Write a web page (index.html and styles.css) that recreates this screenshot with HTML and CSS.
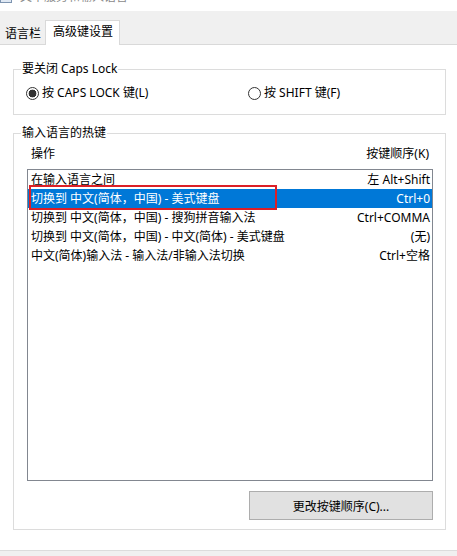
FILE: index.html
```html
<!DOCTYPE html>
<html lang="zh-CN">
<head>
<meta charset="utf-8">
<title>文本服务和输入语言</title>
<link rel="stylesheet" href="styles.css">
</head>
<body>
<div class="titlebar">
  <svg class="appicon" width="12" height="16" viewBox="0 0 12 16"><rect x="0.5" y="0.5" width="11" height="15" fill="#dfe8f3" stroke="#7d94b0"/></svg>
  <span class="title">文本服务和输入语言</span>
</div>
<div class="tabs">
  <div class="tab">语言栏</div>
  <div class="tab active">高级键设置</div>
</div>
<div class="page">
  <fieldset class="group g1">
    <legend>要关闭 Caps Lock</legend>
    <div class="radios">
      <label class="radio"><span class="dot on"></span>按 CAPS LOCK 键(L)</label>
      <label class="radio"><span class="dot"></span>按 SHIFT 键(F)</label>
    </div>
  </fieldset>
  <fieldset class="group g2">
    <legend>输入语言的热键</legend>
    <div class="g2body">
      <div class="listhead"><span>操作</span><span>按键顺序(K)</span></div>
      <div class="list">
        <div class="row"><span>在输入语言之间</span><span>左 Alt+Shift</span></div>
        <div class="row sel"><span>切换到 中文(简体，中国) - 美式键盘</span><span>Ctrl+0</span></div>
        <div class="row"><span>切换到 中文(简体，中国) - 搜狗拼音输入法</span><span>Ctrl+COMMA</span></div>
        <div class="row"><span>切换到 中文(简体，中国) - 中文(简体) - 美式键盘</span><span>(无)</span></div>
        <div class="row"><span>中文(简体)输入法 - 输入法/非输入法切换</span><span>Ctrl+空格</span></div>
        <div class="mark"></div>
      </div>
      <div class="actions"><button class="btn">更改按键顺序(C)...</button></div>
    </div>
  </fieldset>
</div>
<div class="statusbar"></div>
</body>
</html>
```
FILE: styles.css
```css
html, body {
  margin: 0;
  padding: 0;
  background: #ffffff;
}
body {
  font-family: "Microsoft YaHei UI", "Noto Sans", "Noto Sans CJK SC", sans-serif;
  font-size: 12px;
  color: #000;
  width: 457px;
  height: 556px;
  overflow: hidden;
}
.titlebar {
  height: 11px;
  overflow: hidden;
  display: flex;
  align-items: flex-start;
  gap: 8px;
  background: #fff;
}
.appicon {
  flex: none;
  margin-top: -13px;
}
.title {
  color: #8a8a8a;
  line-height: 16px;
  margin-top: -11px;
}
.tabs {
  display: flex;
  align-items: flex-end;
  height: 33px;
  background: #f0f0f0;
  border-bottom: 1px solid #d9d9d9;
}
.tab {
  height: 20px;
  line-height: 20px;
  padding: 0 4px 0 5px;
}
.tab.active {
  height: 24px;
  line-height: 22px;
  background: #fff;
  border: 1px solid #d9d9d9;
  border-bottom: none;
  margin-bottom: -1px;
  padding: 0 6px 0 7px;
}
.page {
  background: #fff;
}
.group {
  margin: 0 11px 0 13px;
  padding: 0;
  border: 1px solid #dcdcdc;
  min-width: 0;
}
.group legend {
  margin-left: 7px;
  padding: 0 1px;
  line-height: 16px;
}
.g1 {
  margin-top: 16px;
}
.radios {
  display: grid;
  grid-template-columns: 222px 1fr;
  padding: 8px 0 13px 12px;
  line-height: 16px;
}
.radio {
  display: flex;
  align-items: center;
  gap: 3px;
}
.dot {
  box-sizing: border-box;
  width: 13px;
  height: 13px;
  border: 1px solid #333;
  border-radius: 50%;
  background: #fff;
  flex: none;
}
.dot.on {
  background: radial-gradient(circle, #333 0 3.6px, #fff 4.2px);
}
.g2 {
  margin-top: 10px;
  margin-bottom: 20px;
}
.g2body {
  padding: 5px 12px 9px 13px;
}
.listhead {
  display: flex;
  justify-content: space-between;
  padding: 0 4px;
  line-height: 16px;
}
.list {
  position: relative;
  margin-top: 7px;
  height: 310px;
  border: 1px solid #828790;
}
.row {
  display: flex;
  justify-content: space-between;
  height: 19px;
  line-height: 19px;
  padding: 0 2px 0 3px;
  white-space: nowrap;
}
.row.sel {
  background: #0078d7;
  color: #fff;
}
.mark {
  position: absolute;
  top: 15px;
  left: 1px;
  width: 248px;
  height: 25px;
  box-sizing: border-box;
  border: 2px solid #dc1f26;
}
.actions {
  display: flex;
  justify-content: flex-end;
  margin-top: 10px;
}
.btn {
  box-sizing: border-box;
  width: 184px;
  height: 29px;
  border: 1px solid #adadad;
  background: #e1e1e1;
  font: inherit;
  color: #000;
  padding: 0;
}
.statusbar {
  height: 6px;
  background: #f0f0f0;
  border-top: 1px solid #dcdcdc;
}
```
